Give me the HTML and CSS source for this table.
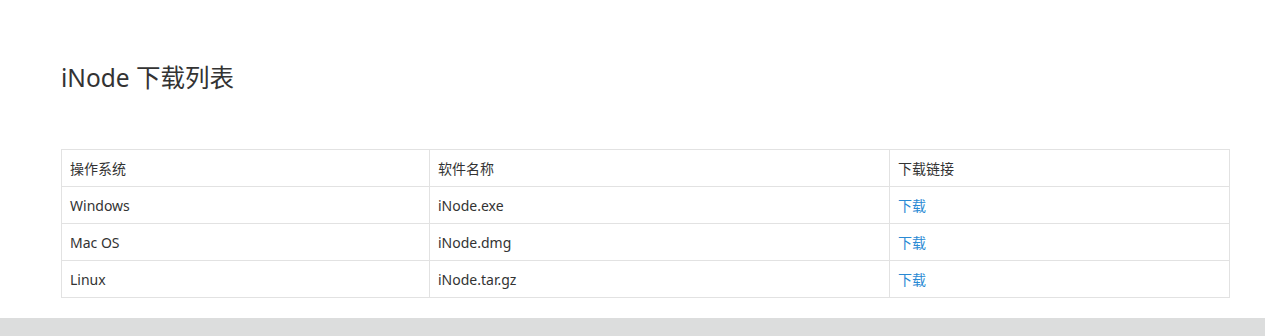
FILE: index.html
```html
<!DOCTYPE html>
<html lang="zh">
<head>
<meta charset="utf-8">
<title>iNode 下载列表</title>
<link rel="stylesheet" href="styles.css">
</head>
<body>
<main class="content">
  <h1 class="title">iNode 下载列表</h1>
  <table class="dl-table">
    <colgroup>
      <col class="c1"><col class="c2"><col class="c3">
    </colgroup>
    <thead>
      <tr><th>操作系统</th><th>软件名称</th><th>下载链接</th></tr>
    </thead>
    <tbody>
      <tr><td>Windows</td><td>iNode.exe</td><td><a href="#">下载</a></td></tr>
      <tr><td>Mac OS</td><td>iNode.dmg</td><td><a href="#">下载</a></td></tr>
      <tr><td>Linux</td><td>iNode.tar.gz</td><td><a href="#">下载</a></td></tr>
    </tbody>
  </table>
</main>
<footer class="footer"></footer>
</body>
</html>
```

FILE: styles.css
```css
html, body {
  margin: 0;
  padding: 0;
  background: #fff;
}
body {
  font-family: "Noto Sans", "Noto Sans CJK SC", sans-serif;
  color: #333;
  font-size: 14px;
}
.content {
  padding: 61px 35px 20px 61px;
}
.title {
  margin: 0 0 54px 0;
  font-size: 24.5px;
  font-weight: 400;
  line-height: 34px;
  color: #333;
}
.dl-table {
  width: 100%;
  border-collapse: collapse;
  table-layout: fixed;
}
.c1 { width: 368px; }
.c2 { width: 460px; }
.dl-table th,
.dl-table td {
  border: 1px solid #e2e2e2;
  padding: 1px 8px 0 8px;
  height: 35px;
  text-align: left;
  font-weight: 400;
  vertical-align: middle;
  line-height: 20px;
}
.dl-table th {
  font-size: 14px;
}
.dl-table a {
  color: #2a8ad4;
  text-decoration: none;
}
.footer {
  height: 18px;
  background: #dcdddd;
}
```
